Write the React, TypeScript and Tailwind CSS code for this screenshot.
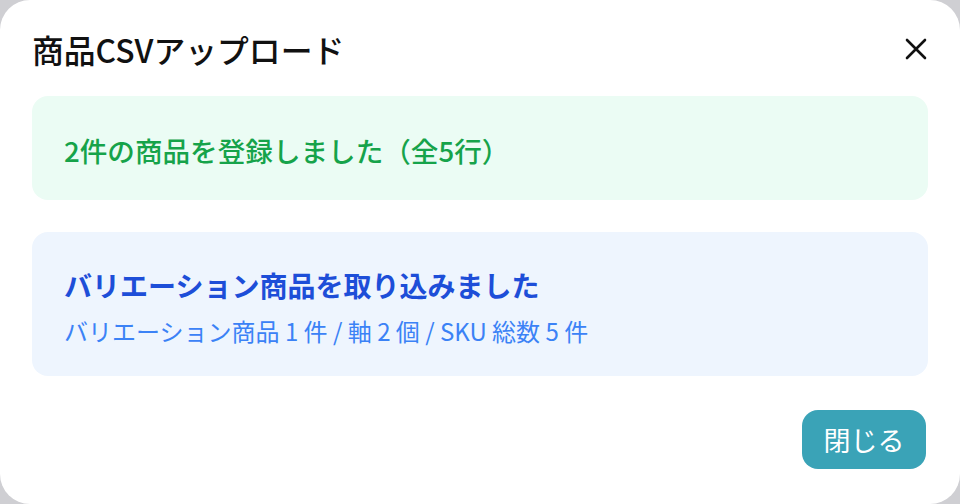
import React from "react";

export default function App() {
  return (
    <div
      className="w-[960px] h-[504px] bg-[#cfcfd3] overflow-hidden"
      style={{ fontFamily: '"Noto Sans CJK JP", "Noto Sans", sans-serif' }}
    >
      <div className="w-full h-full bg-white rounded-[30px] flex flex-col px-8">
        <div className="flex items-center justify-between pt-8 h-[68px]">
          <h1 className="text-[31.8px] leading-[36px] font-medium text-[#111111] -mt-[3px]">
            商品CSVアップロード
          </h1>
          <button className="w-[24px] h-[24px] flex items-center justify-center -mt-[2px]">
            <svg width="22" height="22" viewBox="0 0 22 22" fill="none">
              <path d="M2 2L20 20M20 2L2 20" stroke="#111111" strokeWidth="2.6" strokeLinecap="round" />
            </svg>
          </button>
        </div>

        <div className="mt-[28px] h-[104px] rounded-2xl bg-[#ebfcf4] flex items-center px-8">
          <p className="text-[27.6px] leading-[36px] font-medium text-[#16a34a] pt-[4px]">
            2件の商品を登録しました（全5行）
          </p>
        </div>

        <div className="mt-8 h-[144px] rounded-2xl bg-[#eef5fe] flex flex-col px-8 pt-[35px]">
          <p className="text-[28px] leading-[36px] font-semibold text-[#1d4ed8]">
            バリエーション商品を取り込みました
          </p>
          <p className="mt-[12px] text-[24px] leading-[32px] text-[#3b82f6]">
            バリエーション商品 1 件 / 軸 2 個 / SKU 総数 5 件
          </p>
        </div>

        <div className="flex justify-end mt-[34px]">
          <button className="w-[124px] h-[59px] rounded-2xl bg-[#3aa3b7] text-white text-[27px] leading-[32px] mr-[2px]">
            閉じる
          </button>
        </div>
      </div>
    </div>
  );
}
